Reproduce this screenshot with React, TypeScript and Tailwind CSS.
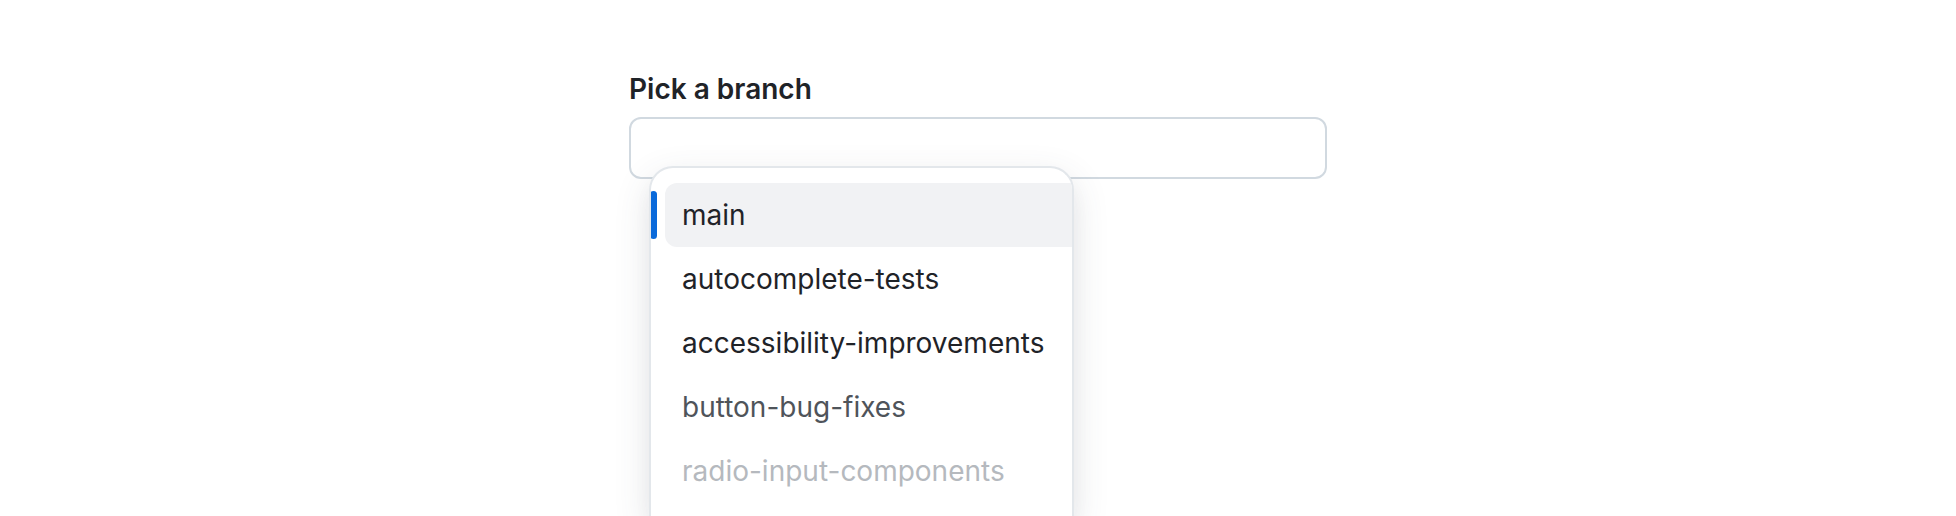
const branches = [
  { name: "main", color: "text-[#1f2328]" },
  { name: "autocomplete-tests", color: "text-[#1f2328]" },
  { name: "accessibility-improvements", color: "text-[#1f2328]" },
  { name: "button-bug-fixes", color: "text-[#4f545a]" },
  { name: "radio-input-components", color: "text-[#b5b9be]" },
];

export default function App() {
  return (
    <div
      className="h-[516px] overflow-hidden bg-white"
      style={{ fontFamily: "Inter, 'Noto Sans', sans-serif" }}
    >
      <div className="mx-auto w-[698px] pt-[69px]">
        <label className="mb-2 block text-[28px] leading-[40px] font-semibold text-[#1f2328]">
          Pick a branch
        </label>
        <div className="relative">
          <div className="h-[62px] rounded-[12px] border-2 border-[#d1d9e0] bg-white" />

          <div className="absolute top-[49px] left-[20px] w-[425px] overflow-hidden rounded-t-[24px] border-2 border-b-0 border-[#e3e7eb] bg-white pt-[15px] pb-[16px] shadow-[0_12px_24px_-6px_rgba(66,74,83,0.06),0_12px_36px_0_rgba(66,74,83,0.14)]">
            <ul className="flex flex-col">
              {branches.map((b, i) => (
                <li key={b.name} className="relative pl-[14px]">
                  {i === 0 && (
                    <span className="absolute top-[8px] left-[-1px] h-[48px] w-[7px] rounded-full bg-[#0969da]" />
                  )}
                  <div
                    className={
                      "h-[64px] rounded-l-[12px] pl-[17px] text-[28px] leading-[64px] whitespace-nowrap " +
                      b.color +
                      (i === 0 ? " bg-[#f1f2f4]" : "")
                    }
                  >
                    {b.name}
                  </div>
                </li>
              ))}
            </ul>
          </div>
        </div>
      </div>
    </div>
  );
}
